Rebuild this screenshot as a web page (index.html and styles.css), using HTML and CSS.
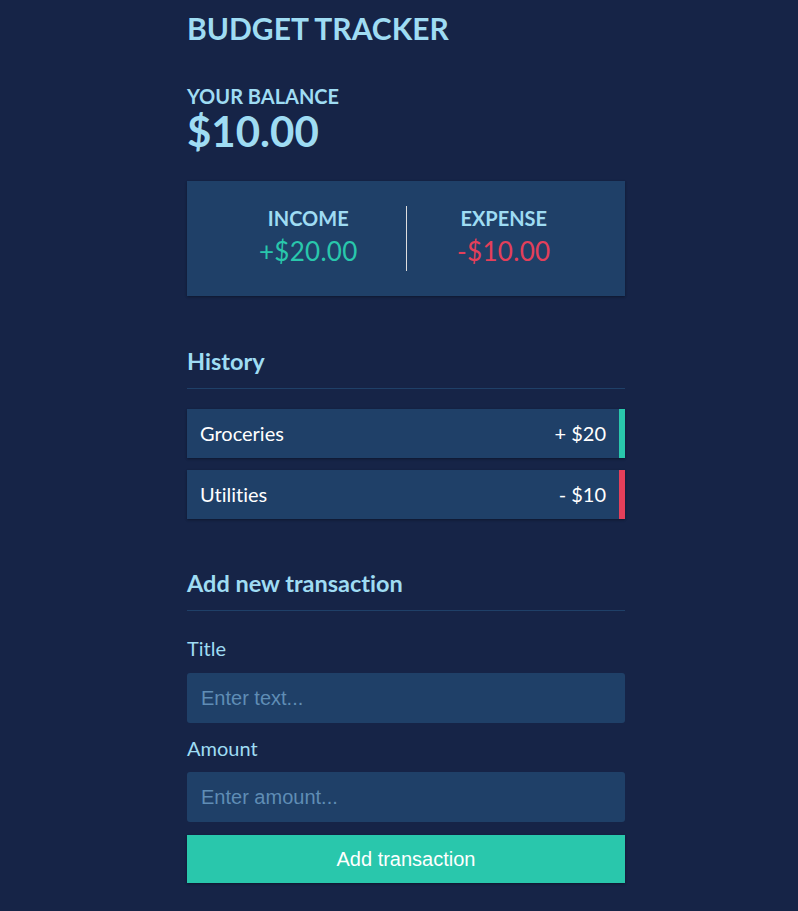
FILE: index.html
```html
<!DOCTYPE html>
<html lang="en">
<head>
<meta charset="utf-8">
<title>Budget Tracker</title>
<link rel="stylesheet" href="styles.css">
</head>
<body>
<div class="container">
  <h1 class="title">BUDGET TRACKER</h1>

  <h4 class="balance-label">YOUR BALANCE</h4>
  <div class="balance">$10.00</div>

  <div class="summary">
    <div class="summary-col summary-col--first">
      <h4 class="summary-label">INCOME</h4>
      <p class="money money--plus">+$20.00</p>
    </div>
    <div class="summary-col">
      <h4 class="summary-label">EXPENSE</h4>
      <p class="money money--minus">-$10.00</p>
    </div>
  </div>

  <h3 class="section-title section-title--history">History</h3>
  <ul class="list">
    <li class="item item--plus"><span>Groceries</span><span>+ $20</span></li>
    <li class="item item--minus"><span>Utilities</span><span>- $10</span></li>
  </ul>

  <h3 class="section-title section-title--add">Add new transaction</h3>
  <form class="form">
    <label class="label" for="text">Title</label>
    <input class="input" id="text" type="text" placeholder="Enter text...">
    <label class="label" for="amount">Amount</label>
    <input class="input input--last" id="amount" type="text" placeholder="Enter amount...">
    <button class="btn" type="button">Add transaction</button>
  </form>
</div>
</body>
</html>
```

FILE: styles.css
```css
* {
  box-sizing: border-box;
}

body {
  margin: 0;
  background: #162447;
  font-family: "Lato", "Liberation Sans", sans-serif;
  font-variant-ligatures: no-common-ligatures;
  color: #9fdcf3;
  display: flex;
  justify-content: center;
  padding: 9px 0 0 14px;
  min-height: 911px;
}

.container {
  width: 438px;
}

.title {
  margin: 0;
  font-size: 30px;
  font-weight: 700;
  line-height: 38px;
}

.balance-label {
  margin: 37px 0 0;
  font-size: 20px;
  font-weight: 700;
  line-height: 24px;
}

.balance {
  margin: 0;
  font-size: 42px;
  font-weight: 700;
  line-height: 46px;
}

.summary {
  margin-top: 27px;
  background: #1f4068;
  padding: 25px 24px;
  display: flex;
  box-shadow: 0 1px 3px rgba(0, 0, 0, 0.12), 0 1px 2px rgba(0, 0, 0, 0.24);
}

.summary-col {
  flex: 1;
  text-align: center;
}

.summary-col--first {
  border-right: 1px solid #dedede;
}

.summary-label {
  margin: 0;
  font-size: 20px;
  font-weight: 700;
  line-height: 24px;
}

.money {
  margin: 6px 0 4px;
  font-size: 26px;
  line-height: 31px;
  letter-spacing: 0.3px;
}

.money--plus {
  color: #29c7ac;
}

.money--minus {
  color: #e43f5a;
}

.section-title {
  margin: 0;
  font-size: 23.5px;
  font-weight: 700;
  line-height: 29px;
  padding-bottom: 12px;
  border-bottom: 1px solid #1f4068;
}

.section-title--history {
  margin-top: 51px;
}

.section-title--add {
  margin-top: 50px;
}

.list {
  list-style: none;
  margin: 20px 0 0;
  padding: 0;
}

.item {
  display: flex;
  justify-content: space-between;
  background: #1f4068;
  color: #ffffff;
  font-size: 20px;
  line-height: 21px;
  padding: 14px 13px;
  margin-bottom: 12px;
  box-shadow: 0 1px 3px rgba(0, 0, 0, 0.12), 0 1px 2px rgba(0, 0, 0, 0.24);
}

.item:last-child {
  margin-bottom: 0;
}

.item--plus {
  border-right: 6px solid #29c7ac;
}

.item--minus {
  border-right: 6px solid #e43f5a;
}

.form {
  display: flex;
  flex-direction: column;
}

.label {
  font-size: 20px;
  line-height: 22px;
  margin: 26px 0 14px;
}

.input + .label {
  margin-top: 14px;
  margin-bottom: 13px;
}

.input {
  height: 50px;
  border: none;
  border-radius: 3px;
  background: #1f4068;
  padding: 0 14px;
  font-family: "Liberation Sans", Arial, sans-serif;
  font-size: 20px;
  color: #ffffff;
  outline: none;
}

.input::placeholder {
  color: #5f8db5;
}

.input--last {
  margin-bottom: 13px;
}

.btn {
  height: 48px;
  border: none;
  background: #29c7ac;
  color: #ffffff;
  font-family: "Liberation Sans", Arial, sans-serif;
  font-size: 20px;
  cursor: pointer;
  box-shadow: 0 1px 3px rgba(0, 0, 0, 0.12), 0 1px 2px rgba(0, 0, 0, 0.24);
}
```
